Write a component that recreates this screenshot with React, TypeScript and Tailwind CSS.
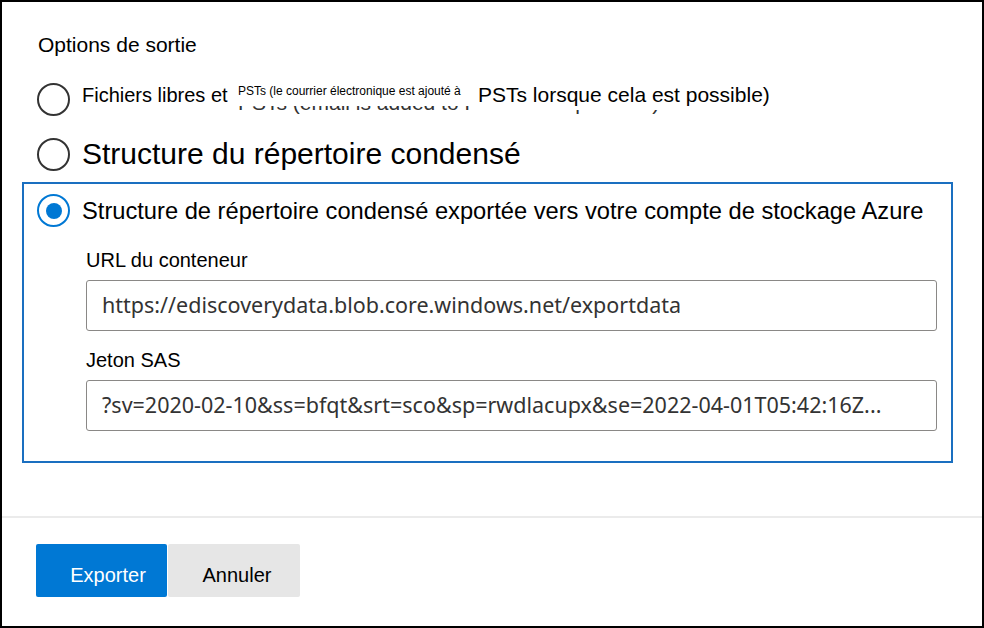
import React from 'react';

const sans = { fontFamily: '"Liberation Sans", Arial, sans-serif' };

const Radio = ({ checked }: { checked?: boolean }) => (
  <span
    className={`flex h-[33px] w-[33px] shrink-0 items-center justify-center rounded-full border-2 ${
      checked ? 'border-[#0078d4]' : 'border-[#333333]'
    }`}
  >
    {checked && <span className="h-[16px] w-[16px] rounded-full bg-[#0078d4]" />}
  </span>
);

const Field = ({ label, value, top }: { label: string; value: string; top: string }) => (
  <div className={top}>
    <div className="text-[20px] leading-[24px] text-black">{label}</div>
    <div className="mt-[8px] flex h-[51px] items-center overflow-hidden rounded-[3px] border border-[#8a8886] px-[15px]">
      <span
        className="whitespace-nowrap text-[21.5px] text-[#333333]"
        style={{ fontFamily: '"Noto Sans", "Open Sans", sans-serif' }}
      >
        {value}
      </span>
    </div>
  </div>
);

const App = () => {
  return (
    <div className="h-[628px] w-[984px] overflow-hidden border-2 border-black bg-white" style={sans}>
      <div className="pl-[20px] pr-[29px] pt-[31px]">
        <div className="ml-[16px] text-[21px] leading-[24px] text-black">Options de sortie</div>

        {/* Option 1 (half translated label) */}
        <div className="ml-[15px] mt-[25px] flex items-center">
          <Radio />
          <div className="relative ml-[12px] h-[34px] w-[700px] text-[21px] leading-[24px] text-black">
            <span className="absolute left-0 top-[1px] text-[20px]">Fichiers libres et</span>
            {/* untranslated text left underneath */}
            <span className="absolute left-[156px] top-[9px] whitespace-nowrap text-[#333333]">
              PSTs (email is added to PSTs when possible)
            </span>
            <span className="absolute left-[152px] top-0 h-[24px] w-[239px] bg-white pl-[4px] text-[12px] leading-[18px]">
              PSTs (le courrier électronique est ajouté à
            </span>
            <span className="absolute left-[390px] top-[-2px] h-[30px] w-[310px] whitespace-nowrap bg-white pl-[6px] pt-[3px]">
              PSTs lorsque cela est possible)
            </span>
          </div>
        </div>

        {/* Option 2 */}
        <div className="ml-[15px] mt-[21px] flex items-center">
          <Radio />
          <span className="ml-[12px] text-[30px] leading-[34px] text-black">Structure du répertoire condensé</span>
        </div>

        {/* Option 3 - selected */}
        <div className="mt-[11px] border-2 border-[#1a6fc0] pb-[30px] pl-[13px] pr-[14px] pt-[10px]">
          <div className="flex items-center">
            <Radio checked />
            <span className="ml-[12px] text-[23.7px] leading-[28px] text-black">
              Structure de répertoire condensé exportée vers votre compte de stockage Azure
            </span>
          </div>
          <div className="pl-[49px]">
            <Field
              top="mt-[21px]"
              label="URL du conteneur"
              value="https://ediscoverydata.blob.core.windows.net/exportdata"
            />
            <Field
              top="mt-[17px]"
              label="Jeton SAS"
              value="?sv=2020-02-10&ss=bfqt&srt=sco&sp=rwdlacupx&se=2022-04-01T05:42:16Z..."
            />
          </div>
        </div>
      </div>

      <div className="mt-[53px] h-[2px] bg-[#ebebeb]" />

      <div className="flex pl-[34px] pt-[26px]">
        <button className="h-[53px] w-[131px] rounded-[2px] bg-[#0078d4] pl-[13px] pt-[8px] text-[20px] text-white">
          Exporter
        </button>
        <button className="ml-px h-[53px] w-[132px] rounded-[2px] bg-[#e6e6e6] pl-[6px] pt-[8px] text-[20px] text-black">
          Annuler
        </button>
      </div>
    </div>
  );
};

export default App;
